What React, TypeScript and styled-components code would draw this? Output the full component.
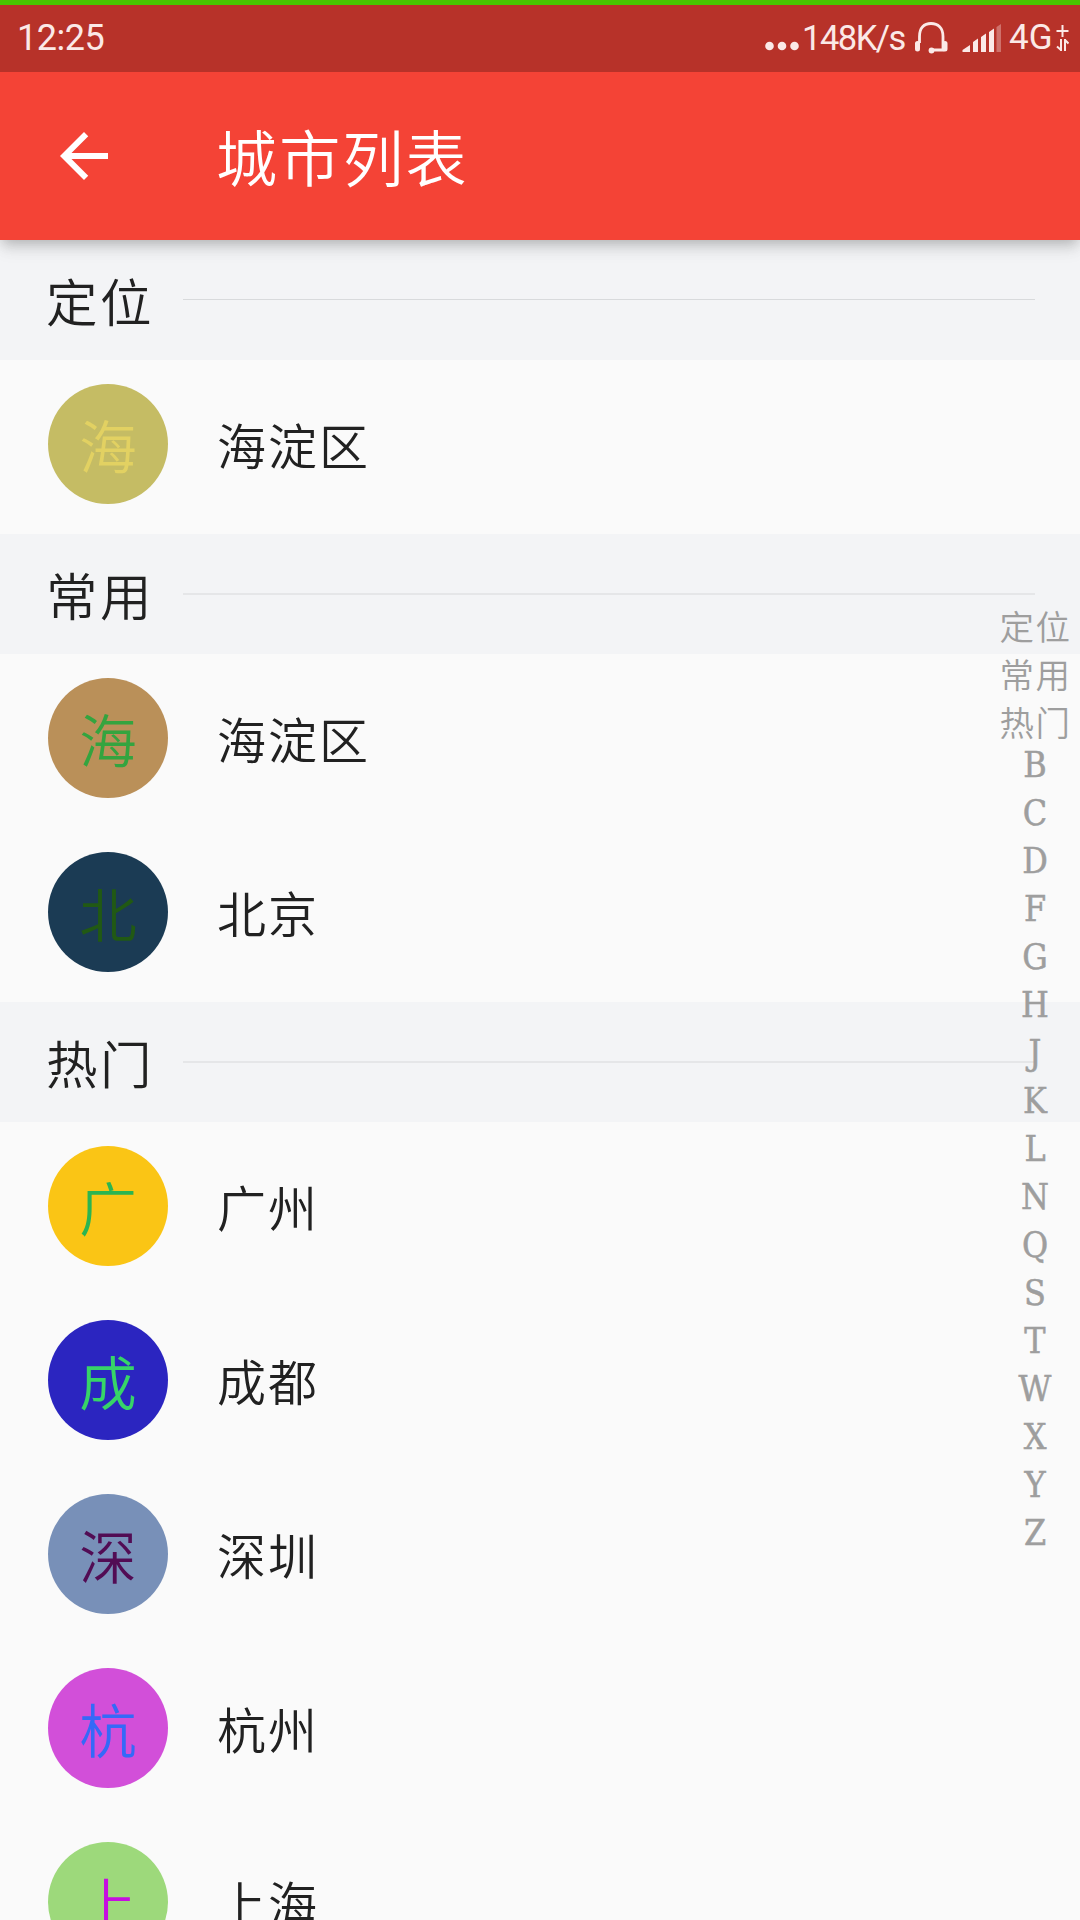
import React from 'react';
import styled, { createGlobalStyle } from 'styled-components';

const GlobalStyle = createGlobalStyle`
  * { box-sizing: border-box; }
  body {
    margin: 0;
    background: #fafafa;
    font-family: Roboto, "Noto Sans CJK SC", sans-serif;
  }
`;

const Screen = styled.div`
  position: relative;
  display: flex;
  flex-direction: column;
  width: 1080px;
  height: 1920px;
  overflow: hidden;
  background: #fafafa;
`;

const StatusBar = styled.div`
  position: relative;
  z-index: 2;
  display: flex;
  align-items: center;
  justify-content: space-between;
  flex: none;
  height: 72px;
  padding: 0 11px 2px 17px;
  border-top: 5px solid #49c400;
  background: #b73229;
  color: #fbe9e7;
`;

const Clock = styled.span`
  font-size: 36px;
  line-height: 42px;
  letter-spacing: -0.5px;
`;

const StatusRight = styled.div`
  display: flex;
  align-items: center;
`;

const Dots = styled.svg`
  margin-right: 3px;
`;

const Speed = styled.span`
  width: 107px;
  font-size: 34.5px;
  line-height: 42px;
  letter-spacing: -1.5px;
  white-space: nowrap;
`;

const Headset = styled.svg`
  margin-left: 5px;
`;

const Signal = styled.svg`
  margin-left: 14px;
`;

const Network = styled.span`
  width: 47px;
  margin-left: 7px;
  font-size: 35px;
  line-height: 42px;
`;

const AppBar = styled.header`
  position: relative;
  z-index: 1;
  display: flex;
  align-items: center;
  flex: none;
  height: 168px;
  padding-left: 48px;
  background: #f44336;
  box-shadow: 0 6px 12px -3px rgba(0, 0, 0, 0.2), 0 12px 15px rgba(0, 0, 0, 0.05), 0 3px 22px rgba(0, 0, 0, 0.06);
`;

const Title = styled.h1`
  margin: 0 0 0 96px;
  color: #fff;
  font-family: "Noto Sans CJK SC", sans-serif;
  font-size: 61px;
  font-weight: 350;
  line-height: 84px;
  letter-spacing: 2.2px;
`;

const SectionHeader = styled.div`
  display: flex;
  align-items: center;
  flex: none;
  height: 120px;
  padding: 0 45px 0 46px;
  background: #f3f4f6;
`;

const SectionTitle = styled.h2`
  width: 137px;
  margin: 0;
  color: #212121;
  font-family: "Noto Sans CJK SC", sans-serif;
  font-size: 51.5px;
  font-weight: 350;
  line-height: 72px;
  letter-spacing: 2.5px;
`;

const Rule = styled.div<{ $crisp: boolean }>`
  flex: 1;
  height: ${(p) => (p.$crisp ? 1 : 2)}px;
  margin-bottom: ${(p) => (p.$crisp ? 1 : 0)}px;
  background: ${(p) => (p.$crisp ? '#d8dadc' : '#e5e6e8')};
`;

const Row = styled.div`
  display: flex;
  align-items: center;
  flex: none;
  height: 174px;
  padding: 0 48px 6px;
`;

const Avatar = styled.div<{ $bg: string; $fg: string }>`
  display: flex;
  align-items: center;
  justify-content: center;
  flex: none;
  width: 120px;
  height: 120px;
  border-radius: 50%;
  background: ${(p) => p.$bg};
  color: ${(p) => p.$fg};
  font-family: "Noto Sans CJK SC", sans-serif;
  font-size: 57.5px;
  font-weight: 350;
  line-height: 80px;
`;

const CityName = styled.span`
  margin-left: 49px;
  color: #212121;
  font-family: "Noto Sans CJK SC", sans-serif;
  font-size: 49px;
  font-weight: 350;
  line-height: 70px;
  letter-spacing: 2px;
`;

const IndexBar = styled.nav`
  position: absolute;
  top: 600px;
  right: 0;
  z-index: 2;
  display: flex;
  flex-direction: column;
  width: 90px;
  color: #9e9e9e;
`;

const IndexItem = styled.span<{ $latin: boolean }>`
  height: 48px;
  padding-left: ${(p) => (p.$latin ? 0 : 1)}px;
  text-align: center;
  white-space: nowrap;
  font-family: ${(p) => (p.$latin ? '"DejaVu Serif Condensed", "DejaVu Serif", serif' : '"Noto Sans CJK SC", sans-serif')};
  font-stretch: ${(p) => (p.$latin ? 'condensed' : 'normal')};
  font-size: ${(p) => (p.$latin ? 35.5 : 34.5)}px;
  letter-spacing: ${(p) => (p.$latin ? 0 : 1.5)}px;
  font-weight: ${(p) => (p.$latin ? 400 : 350)};
  line-height: ${(p) => (p.$latin ? 41 : 51)}px;
  -webkit-text-stroke: ${(p) => (p.$latin ? '0.5px #9e9e9e' : '0')};
`;

type City = { name: string; bg: string; fg: string };

const sections: { title: string; cities: City[] }[] = [
  { title: '定位', cities: [{ name: '海淀区', bg: '#c5bc64', fg: '#e2d162' }] },
  {
    title: '常用',
    cities: [
      { name: '海淀区', bg: '#ba9059', fg: '#34a43f' },
      { name: '北京', bg: '#1b3b54', fg: '#215914' },
    ],
  },
  {
    title: '热门',
    cities: [
      { name: '广州', bg: '#fac515', fg: '#2bb551' },
      { name: '成都', bg: '#2b25c0', fg: '#37d468' },
      { name: '深圳', bg: '#7890b8', fg: '#520c54' },
      { name: '杭州', bg: '#d24fd9', fg: '#3569f8' },
      { name: '上海', bg: '#9dd97b', fg: '#c60ee0' },
    ],
  },
];

const letters = 'BCDFGHJKLNQSTWXYZ'.split('');

export default function App() {
  return (
    <>
      <GlobalStyle />
      <Screen>
        <StatusBar>
          <Clock>12:25</Clock>
          <StatusRight>
            <Dots width="34" height="40" viewBox="0 0 34 40" fill="#fbe9e7">
              <circle cx="4.5" cy="28" r="4.3" />
              <circle cx="17" cy="28" r="4.3" />
              <circle cx="29.5" cy="28" r="4.3" />
            </Dots>
            <Speed>148K/s</Speed>
            <Headset width="34" height="34" viewBox="0 0 34 34" fill="none" stroke="#fbe9e7">
              <path d="M5.500 22V15.500C5.500 7 10 2.500 17 2.500S29 7 29 15.500v13.500H18" strokeWidth="2.800" />
              <path d="M3.500 22.500v5.500M31 22.500v5.500" strokeWidth="5" strokeLinecap="round" />
              <circle cx="17.500" cy="29.500" r="2.900" fill="#fbe9e7" stroke="none" />
            </Headset>
            <Signal width="40" height="28" viewBox="0 0 40 28" fill="#fbe9e7">
              <path d="M0.500 28v-2l7.500-5V28zM11 28V18l5-3.500V28zM19 28V13l5-3.500V28zM27 28V8l5-3.500V28z" />
              <path d="M34.500 28V3L39 0v28z" opacity="0.35" />
            </Signal>
            <Network>4G</Network>
            <svg width="13" height="28" viewBox="0 0 13 28" fill="none" stroke="#fbe9e7" strokeWidth="2">
              <path d="M0.500 7h12M6.500 1v12" />
              <path d="M5 15v12M5 26L1 22.500M9 27V15M9 16l3.500 3.500" />
            </svg>
          </StatusRight>
        </StatusBar>
        <AppBar>
          <svg width="72" height="72" viewBox="0 0 24 24" fill="#fff">
            <path d="M20 11H7.830l5.590-5.590L12 4l-8 8 8 8 1.410-1.410L7.830 13H20v-2z" />
          </svg>
          <Title>城市列表</Title>
        </AppBar>
        {sections.map((section, i) => (
          <React.Fragment key={section.title}>
            <SectionHeader>
              <SectionTitle>{section.title}</SectionTitle>
              <Rule $crisp={i === 0} />
            </SectionHeader>
            {section.cities.map((city) => (
              <Row key={city.name}>
                <Avatar $bg={city.bg} $fg={city.fg}>{city.name[0]}</Avatar>
                <CityName>{city.name}</CityName>
              </Row>
            ))}
          </React.Fragment>
        ))}
        <IndexBar>
          {sections.map((s) => (
            <IndexItem key={s.title} $latin={false}>{s.title}</IndexItem>
          ))}
          {letters.map((l) => (
            <IndexItem key={l} $latin>{l}</IndexItem>
          ))}
        </IndexBar>
      </Screen>
    </>
  );
}
